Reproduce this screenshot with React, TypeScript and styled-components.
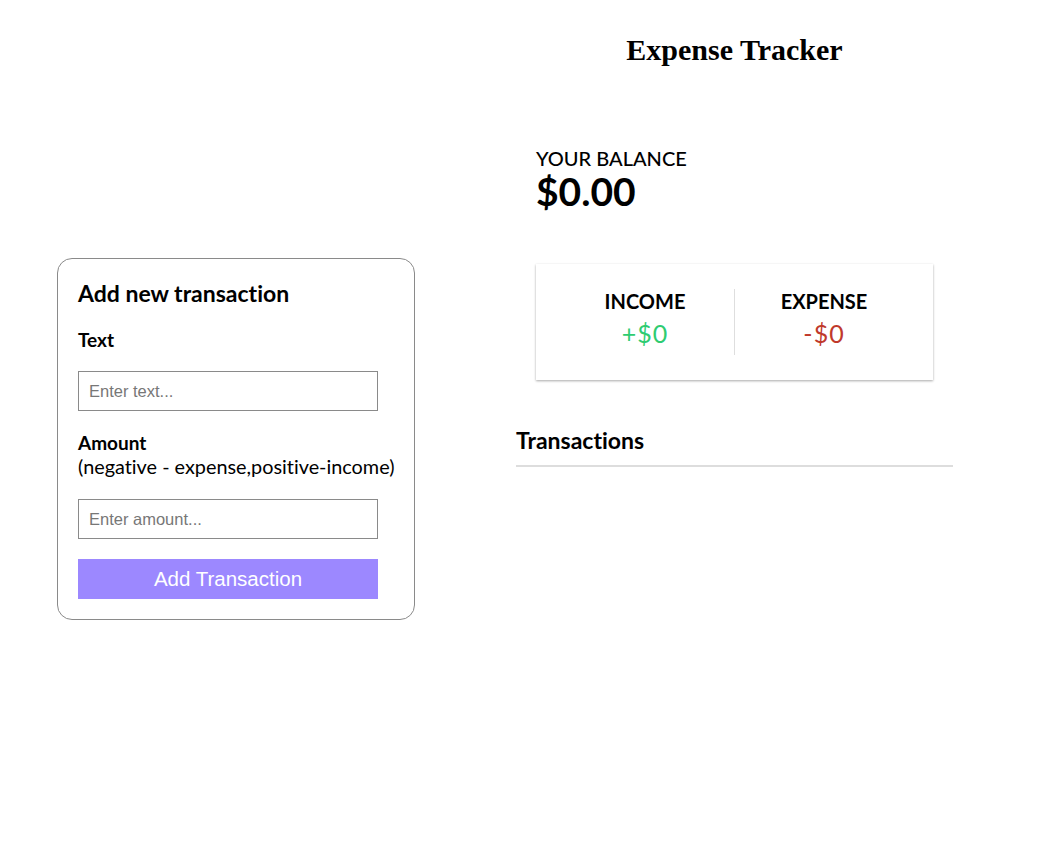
import {createGlobalStyle} from 'styled-components'
import styled from 'styled-components'

const GlobalStyle = createGlobalStyle`
  * {
    box-sizing: border-box;
  }
  body {
    margin: 0;
    background: #ffffff;
    font-family: Lato, 'Noto Sans', sans-serif;
    font-variant-ligatures: none;
    color: #000000;
  }
`

const App = () => {
  return (
    <>
      <GlobalStyle />
      <Page>
        <FormColumn>
          <FormCard>
            <FormTitle>Add new transaction</FormTitle>
            <Field>
              <Label htmlFor="text">Text</Label>
              <Input id="text" type="text" placeholder="Enter text..." />
            </Field>
            <Field>
              <Label htmlFor="amount">
                Amount
                <Hint>(negative - expense,positive-income)</Hint>
              </Label>
              <Input id="amount" type="number" placeholder="Enter amount..." />
            </Field>
            <SubmitButton type="button">Add Transaction</SubmitButton>
          </FormCard>
        </FormColumn>

        <TrackerColumn>
          <Title>Expense Tracker</Title>
          <Balance>
            <BalanceLabel>Your Balance</BalanceLabel>
            <BalanceAmount>$0.00</BalanceAmount>
          </Balance>
          <IncExpCard>
            <IncExpCell $divider>
              <IncExpLabel>Income</IncExpLabel>
              <Money $tone="plus">+$0</Money>
            </IncExpCell>
            <IncExpCell>
              <IncExpLabel>Expense</IncExpLabel>
              <Money $tone="minus">-$0</Money>
            </IncExpCell>
          </IncExpCard>
          <SectionTitle>Transactions</SectionTitle>
          <TransactionList />
        </TrackerColumn>
      </Page>
    </>
  )
}

const Page = styled.main`
  display: flex;
  align-items: flex-start;
  padding-left: 57px;
`

const FormColumn = styled.section`
  width: 358px;
  padding-top: 258px;
`

const FormCard = styled.form`
  border: 1px solid #8a8a8a;
  border-radius: 15px;
  padding: 20px;
`

const FormTitle = styled.h3`
  margin: 0 0 21px;
  font-size: 23px;
  font-weight: 700;
`

const Field = styled.div`
  margin-bottom: 20px;
`

const Label = styled.label`
  display: inline-block;
  font-size: 19px;
  font-weight: 700;
  margin-bottom: 20px;
`

const Hint = styled.span`
  display: block;
  font-size: 19.85px;
  line-height: 25px;
  font-weight: 400;
  white-space: nowrap;
`

const Input = styled.input`
  display: block;
  width: 300px;
  height: 40px;
  border: 1px solid #8a8a8a;
  padding: 0 10px;
  font-family: 'Liberation Sans', Arial, sans-serif;
  font-size: 16.5px;
  outline: none;

  &::placeholder {
    color: #777777;
  }
`

const SubmitButton = styled.button`
  display: block;
  width: 300px;
  height: 40px;
  border: none;
  background: #9c88ff;
  color: #ffffff;
  font-family: 'Liberation Sans', Arial, sans-serif;
  font-size: 20.5px;
  cursor: pointer;
`

const TrackerColumn = styled.section`
  width: 437px;
  margin-left: 101px;
  padding-top: 33px;
`

const Title = styled.h1`
  margin: 0;
  text-align: center;
  font-family: 'Liberation Serif', 'Times New Roman', serif;
  font-size: 30px;
  font-weight: 700;
`

const Balance = styled.div`
  padding: 0 20px;
  margin-top: 79px;
`

const BalanceLabel = styled.h4`
  margin: 0;
  font-size: 20px;
  font-weight: 500;
  text-transform: uppercase;
`

const BalanceAmount = styled.h1`
  margin: 0;
  font-size: 39px;
  font-weight: 700;
  line-height: 1.1;
`

const IncExpCard = styled.div`
  display: flex;
  margin: 51px 20px 0;
  padding: 25px 20px;
  background: #ffffff;
  box-shadow: 0 1px 3px rgba(0, 0, 0, 0.12), 0 1px 2px rgba(0, 0, 0, 0.24);
`

const IncExpCell = styled.div<{$divider?: boolean}>`
  flex: 1;
  text-align: center;
  border-right: ${({$divider}) => ($divider ? '1px solid #dedede' : 'none')};
`

const IncExpLabel = styled.h4`
  margin: 0;
  font-size: 20px;
  font-weight: 700;
  text-transform: uppercase;
`

const Money = styled.p<{$tone: 'plus' | 'minus'}>`
  margin: 5px 0 7px;
  font-size: 25px;
  letter-spacing: 1px;
  color: ${({$tone}) => ($tone === 'plus' ? '#2ecc71' : '#c0392b')};
`

const SectionTitle = styled.h3`
  margin: 46px 0 0;
  padding-bottom: 11px;
  font-size: 23px;
  font-weight: 700;
  border-bottom: 2px solid #dddddd;
`

const TransactionList = styled.ul`
  list-style: none;
  margin: 0;
  padding: 0;
`

export default App
